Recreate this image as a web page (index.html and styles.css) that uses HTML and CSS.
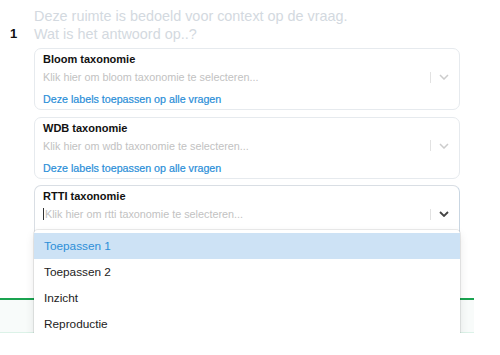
FILE: index.html
```html
<!DOCTYPE html>
<html lang="nl">
<head>
    <meta charset="UTF-8">
    <title>Vraag</title>
    <link rel="stylesheet" href="styles.css">
</head>
<body>
    <div class="question">
        <div class="q-number">1</div>
        <div class="q-body">
            <div class="q-text">
                <p>Deze ruimte is bedoeld voor context op de vraag.</p>
                <p>Wat is het antwoord op..?</p>
            </div>

            <!-- taxonomy selects -->
            <div class="tax-card">
                <div class="tax-label">Bloom taxonomie</div>
                <div class="select">
                    <span class="select-placeholder">Klik hier om bloom taxonomie te selecteren...</span>
                    <span class="select-sep"></span>
                    <svg class="select-chevron" width="10" height="6" viewBox="0 0 10 6"><path d="M1 1l4 4 4-4" fill="none" stroke="currentColor" stroke-width="1.5"/></svg>
                </div>
                <a class="tax-link" href="#">Deze labels toepassen op alle vragen</a>
            </div>

            <div class="tax-card">
                <div class="tax-label">WDB taxonomie</div>
                <div class="select">
                    <span class="select-placeholder">Klik hier om wdb taxonomie te selecteren...</span>
                    <span class="select-sep"></span>
                    <svg class="select-chevron" width="10" height="6" viewBox="0 0 10 6"><path d="M1 1l4 4 4-4" fill="none" stroke="currentColor" stroke-width="1.5"/></svg>
                </div>
                <a class="tax-link" href="#">Deze labels toepassen op alle vragen</a>
            </div>

            <div class="tax-card active">
                <div class="tax-label">RTTI taxonomie</div>
                <div class="select open">
                    <span class="select-caret"></span>
                    <span class="select-placeholder">Klik hier om rtti taxonomie te selecteren...</span>
                    <span class="select-sep"></span>
                    <svg class="select-chevron" width="10" height="6" viewBox="0 0 10 6"><path d="M1 1l4 4 4-4" fill="none" stroke="currentColor" stroke-width="1.8"/></svg>
                </div>
                <a class="tax-link" href="#">Deze labels toepassen op alle vragen</a>

                <ul class="select-menu">
                    <li class="option focused">Toepassen 1</li>
                    <li class="option">Toepassen 2</li>
                    <li class="option">Inzicht</li>
                    <li class="option">Reproductie</li>
                </ul>
            </div>

            <button class="save-btn">Opslaan</button>
        </div>
    </div>

    <div class="answer-panel"></div>
</body>
</html>
```

FILE: styles.css
```css
body {
    margin: 0;
    font-family: 'Liberation Sans', Arial, sans-serif;
    background: #fff;
    color: #222;
}
p {
    margin: 0;
}
.question {
    display: flex;
    width: 460px;
    padding-top: 7px;
}
.q-number {
    width: 34px;
    box-sizing: border-box;
    padding: 19px 0 0 10px;
    font-size: 13px;
    font-weight: bold;
    color: #111;
}
.q-body {
    flex: 1;
}
.q-text {
    font-size: 14.4px;
    line-height: 18px;
    color: #d3d9e0;
    margin-bottom: 5px;
}
.tax-card {
    position: relative;
    border: 1px solid #e6eaee;
    border-radius: 7px;
    padding: 3px 8px 0;
    height: 62px;
    box-sizing: border-box;
    margin-bottom: 6.5px;
}
.tax-card.active {
    border-color: #d9dee4 #c9d6e2 #d9dee4 #d9dee4;
}
.tax-label {
    font-size: 11px;
    font-weight: bold;
    line-height: 14px;
    color: #111;
}
.select {
    display: flex;
    align-items: center;
    height: 18px;
    margin-top: 2px;
}
.select-placeholder {
    flex: 1;
    font-size: 10.8px;
    color: #c2c2c2;
}
.select-caret {
    width: 1px;
    height: 12px;
    background: #333;
    margin-right: 1px;
}
.select-sep {
    width: 1px;
    height: 11px;
    background: #e2e2e2;
    margin-right: 8px;
}
.select-chevron {
    color: #cccccc;
    margin-right: 2px;
}
.select.open .select-chevron {
    color: #444;
}
.tax-link {
    display: block;
    margin-top: 6px;
    font-size: 10.7px;
    line-height: 14px;
    color: #2a8ed8;
    text-decoration: none;
    -webkit-text-stroke: 0.2px #2a8ed8;
}
.select-menu {
    position: absolute;
    top: 44px;
    left: -1px;
    right: -1px;
    z-index: 5;
    list-style: none;
    margin: 0;
    padding: 3px 0 4px;
    background: #fff;
    border-radius: 4px;
    box-shadow: 0 0 0 1px rgba(0, 0, 0, 0.08), 0 4px 10px rgba(0, 0, 0, 0.1);
}
.option {
    height: 26px;
    line-height: 26px;
    padding-left: 10px;
    font-size: 11.8px;
    color: #222;
}
.option.focused {
    background: #cde2f5;
    color: #2d8fd8;
}
.save-btn {
    display: block;
    margin-top: 2px;
    height: 16px;
    width: 80px;
    border: none;
    border-radius: 3px;
    background: #2d8fd8;
    color: #fff;
    font-size: 11px;
}
.answer-panel {
    width: 474px;
    height: 35px;
    margin-top: 28px;
    border-top: 2px solid #1aa350;
    border-bottom: 1px solid #dcf2e8;
    background: #f8fbfa;
    box-sizing: border-box;
}
```
